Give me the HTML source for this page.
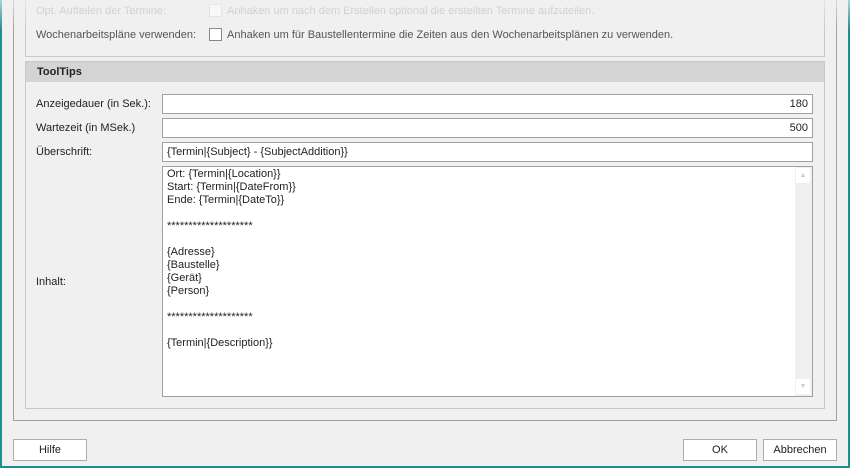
<!DOCTYPE html>
<html><head><style>
body{margin:0;width:850px;height:468px;background:#f0f0f0;font-family:"Liberation Sans",sans-serif;font-size:11px;color:#222;position:relative;overflow:hidden}
.a{position:absolute}
.box{position:absolute;background:#fff;border:1px solid #a0a0a0;box-sizing:border-box}
.btn{position:absolute;background:#fff;border:1px solid #adadad;box-sizing:border-box;text-align:center;line-height:20px}
</style></head><body>
<div class="a" style="left:0;top:0;width:2px;height:468px;background:#1e8f8f"></div>
<div class="a" style="right:0;top:0;width:2px;height:468px;background:#1e8f8f"></div>
<div class="a" style="left:0;bottom:0;width:850px;height:2px;background:#1e8f8f"></div>
<div class="a" style="left:13px;top:-2px;width:824px;height:423px;border:1px solid #a0a0a0;box-sizing:border-box"></div>
<div class="a" style="left:25px;top:-2px;width:800px;height:59px;border:1px solid #c8c8c8;box-sizing:border-box"></div>
<div class="a" style="left:36px;top:5px;color:#b8b8b8">Opt. Aufteilen der Termine:</div>
<div class="a" style="left:209px;top:4px;width:13px;height:13px;border:1px solid #ddd;background:#fff;box-sizing:border-box"></div>
<div class="a" style="left:227px;top:5px;color:#b8b8b8">Anhaken um nach dem Erstellen optional die erstellten Termine aufzuteilen.</div>
<div class="a" style="left:36px;top:29px;color:#555">Wochenarbeitspläne verwenden:</div>
<div class="a" style="left:209px;top:28px;width:13px;height:13px;border:1px solid #888;background:#fff;box-sizing:border-box"></div>
<div class="a" style="left:227px;top:29px;color:#555">Anhaken um für Baustellentermine die Zeiten aus den Wochenarbeitsplänen zu verwenden.</div>
<div class="a" style="left:0;top:0;width:850px;height:30px;background:linear-gradient(rgba(240,240,240,.7),rgba(240,240,240,0))"></div>
<div class="a" style="left:25px;top:61px;width:800px;height:348px;border:1px solid #c8c8c8;box-sizing:border-box"></div>
<div class="a" style="left:26px;top:62px;width:798px;height:20px;background:#d4d4d4;font-weight:bold;line-height:20px;padding-left:11px;box-sizing:border-box;color:#222">ToolTips</div>
<div class="a" style="left:36px;top:98px">Anzeigedauer (in Sek.):</div>
<div class="box" style="left:162px;top:94px;width:651px;height:20px;text-align:right;padding-right:4px;line-height:18px">180</div>
<div class="a" style="left:36px;top:122px">Wartezeit (in MSek.)</div>
<div class="box" style="left:162px;top:118px;width:651px;height:20px;text-align:right;padding-right:4px;line-height:18px">500</div>
<div class="a" style="left:36px;top:146px">Überschrift:</div>
<div class="box" style="left:162px;top:142px;width:651px;height:20px;padding-left:4px;line-height:18px">{Termin|{Subject} - {SubjectAddition}}</div>
<div class="a" style="left:36px;top:276px">Inhalt:</div>
<div class="box" style="left:162px;top:166px;width:651px;height:231px;padding:1px 4px;line-height:13px;white-space:pre">Ort: {Termin|{Location}}
Start: {Termin|{DateFrom}}
Ende: {Termin|{DateTo}}

********************

{Adresse}
{Baustelle}
{Gerät}
{Person}

********************

{Termin|{Description}}</div>
<div class="a" style="left:795px;top:167px;width:17px;height:229px;background:#f0f0f0"></div>
<div class="a" style="left:796px;top:168px;width:14px;height:15px;background:#fff;color:#ccc;font-size:7px;text-align:center;line-height:15px">▲</div>
<div class="a" style="left:796px;top:379px;width:14px;height:15px;background:#fff;color:#ccc;font-size:7px;text-align:center;line-height:15px">▼</div>
<div class="btn" style="left:13px;top:439px;width:74px;height:22px">Hilfe</div>
<div class="btn" style="left:683px;top:439px;width:74px;height:22px">OK</div>
<div class="btn" style="left:763px;top:439px;width:74px;height:22px">Abbrechen</div>
</body></html>
